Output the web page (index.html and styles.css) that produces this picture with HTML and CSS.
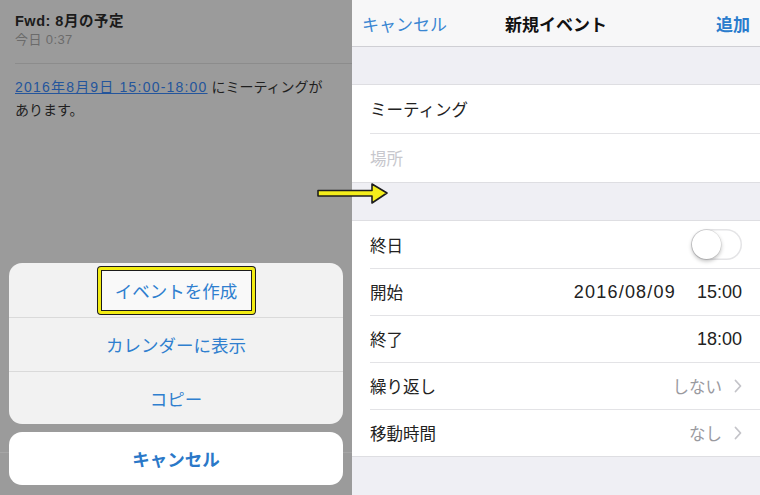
FILE: index.html
```html
<!DOCTYPE html>
<html lang="ja">
<head>
<meta charset="utf-8">
<title>新規イベント</title>
<link rel="stylesheet" href="styles.css">
</head>
<body>
<div class="screen">
  <section class="mail">
    <div class="mail-head">
      <div class="subject">Fwd: 8月の予定</div>
      <div class="date">今日 0:37</div>
    </div>
    <div class="mail-body">
      <span class="link">2016年8月9日 15:00-18:00</span> にミーティングが<br>あります。
    </div>
    <div class="sheet">
      <div class="sheet-group">
        <div class="sheet-row"><span class="mark">イベントを作成</span></div>
        <div class="sheet-row">カレンダーに表示</div>
        <div class="sheet-row">コピー</div>
      </div>
      <div class="sheet-cancel">キャンセル</div>
    </div>
  </section>

  <section class="event">
    <header class="nav">
      <span class="nav-left">キャンセル</span>
      <span class="nav-title">新規イベント</span>
      <span class="nav-right">追加</span>
    </header>
    <div class="group">
      <div class="row"><span class="label">ミーティング</span></div>
      <div class="row"><span class="label placeholder">場所</span></div>
    </div>
    <div class="group">
      <div class="row">
        <span class="label">終日</span>
        <span class="switch"><span class="knob"></span></span>
      </div>
      <div class="row">
        <span class="label">開始</span>
        <span class="value"><span class="day">2016/08/09</span><span class="time">15:00</span></span>
      </div>
      <div class="row">
        <span class="label">終了</span>
        <span class="value"><span class="time">18:00</span></span>
      </div>
      <div class="row">
        <span class="label">繰り返し</span>
        <span class="detail">しない<svg class="chev" viewBox="0 0 8 14" width="8" height="14"><polyline points="1.5,1.5 6.5,7 1.5,12.5" fill="none" stroke="#c4c4c9" stroke-width="1.8" stroke-linecap="round" stroke-linejoin="round"/></svg></span>
      </div>
      <div class="row">
        <span class="label">移動時間</span>
        <span class="detail">なし<svg class="chev" viewBox="0 0 8 14" width="8" height="14"><polyline points="1.5,1.5 6.5,7 1.5,12.5" fill="none" stroke="#c4c4c9" stroke-width="1.8" stroke-linecap="round" stroke-linejoin="round"/></svg></span>
      </div>
    </div>
  </section>

  <svg class="arrow" viewBox="0 0 72 24" width="72" height="24">
    <polygon points="1,8.5 55,8.5 55,2 70,11 55,21 55,14 1,14" fill="#f4ee1c" stroke="#1e1e1e" stroke-width="1.6" stroke-linejoin="round"/>
  </svg>
</div>
</body>
</html>
```

FILE: styles.css
```css
* { box-sizing: border-box; }

html, body {
  margin: 0;
  padding: 0;
}

body {
  font-family: "Liberation Sans", "Noto Sans CJK JP", sans-serif;
  background: #efeff4;
}

.screen {
  position: relative;
  width: 760px;
  height: 495px;
  display: flex;
  overflow: hidden;
}

/* ---------- left: dimmed mail + action sheet ---------- */
.mail {
  width: 352px;
  flex: 0 0 352px;
  background: #9b9b9b;
  display: flex;
  flex-direction: column;
}

.mail-head {
  margin-left: 15px;
  padding: 11px 0 14px;
  border-bottom: 1px solid #8c8c8c;
}

.subject {
  font-size: 14.5px;
  font-weight: bold;
  line-height: 20px;
  letter-spacing: 0.5px;
  color: #1b1b1b;
}

.date {
  font-size: 13px;
  line-height: 18px;
  letter-spacing: 0.4px;
  color: #6b6b6b;
}

.mail-body {
  padding: 12px 15px 0;
  font-size: 14px;
  line-height: 23px;
  color: #1f1f1f;
}

.link {
  color: #24559c;
  text-decoration: underline;
  letter-spacing: 1.2px;
}

.sheet {
  margin-top: auto;
  padding: 0 9px 10px;
  display: flex;
  flex-direction: column;
  gap: 8px;
  background: linear-gradient(to bottom, transparent 189px, #a6a6a6 189px, #a6a6a6 190px, transparent 190px);
}

.sheet-group {
  background: #f2f2f2;
  border-radius: 13px;
  overflow: hidden;
}

.sheet-row {
  height: 54px;
  display: flex;
  align-items: center;
  justify-content: center;
  font-size: 17.5px;
  color: #2f7fcf;
}

.sheet-row + .sheet-row {
  border-top: 1px solid #dadada;
}

.sheet-row:last-child {
  height: 53px;
}

.mark {
  width: 157px;
  height: 47px;
  display: flex;
  align-items: center;
  justify-content: center;
  border: 3px solid #f2ec14;
  border-radius: 3px;
  background: #f9f9f9;
  box-shadow: 0 0 0 1px #1c1c1c, inset 0 0 0 1px #1c1c1c;
  margin-top: 1px;
}

.sheet-cancel {
  height: 53px;
  background: #ffffff;
  border-radius: 13px;
  display: flex;
  align-items: center;
  justify-content: center;
  font-size: 17.5px;
  font-weight: bold;
  color: #2a78c8;
}

/* ---------- right: new event ---------- */
.event {
  flex: 1;
  background: #efeff4;
  display: flex;
  flex-direction: column;
}

.nav {
  height: 47px;
  flex: 0 0 47px;
  background: #f7f7f8;
  border-bottom: 1px solid #cfcfd4;
  display: grid;
  grid-template-columns: 1fr auto 1fr;
  align-items: center;
  padding: 0 10px 0 10px;
  font-size: 17px;
}

.nav-left {
  justify-self: start;
  color: #3a86d2;
}

.nav-title {
  font-weight: bold;
  color: #111;
}

.nav-right {
  justify-self: end;
  font-weight: bold;
  color: #2a7ccd;
}

.group {
  margin-top: 37px;
  background: #fff;
  border-top: 1px solid #dedee2;
  border-bottom: 1px solid #dedee2;
}

.row {
  height: 48px;
  margin-left: 18px;
  padding-right: 18px;
  display: flex;
  align-items: center;
  justify-content: space-between;
}

.group + .group .row {
  height: 47px;
}

.row + .row {
  border-top: 1px solid #e3e3e6;
}

.group:first-of-type .row + .row {
  height: 49px;
}

.label {
  font-size: 16.5px;
  color: #222;
}

.placeholder {
  color: #c7c7cd;
}

.value {
  display: flex;
  gap: 21px;
  font-size: 18px;
  color: #222;
}

.day {
  letter-spacing: 1.2px;
}

.detail {
  display: flex;
  align-items: center;
  gap: 12px;
  font-size: 16.5px;
  color: #9a9a9f;
}

.chev {
  display: block;
}

.switch {
  width: 51px;
  height: 31px;
  border-radius: 16px;
  background: #fff;
  box-shadow: inset 0 0 0 1.5px #e4e4e6;
  display: flex;
  align-items: center;
  padding: 1px;
}

.knob {
  width: 29px;
  height: 29px;
  border-radius: 50%;
  background: #fff;
  box-shadow: 0 2px 4px rgba(0, 0, 0, 0.28), 0 0 0 0.5px rgba(0, 0, 0, 0.12);
}

/* annotation arrow drawn over the screenshot */
.arrow {
  position: absolute;
  left: 317px;
  top: 182px;
}
```
